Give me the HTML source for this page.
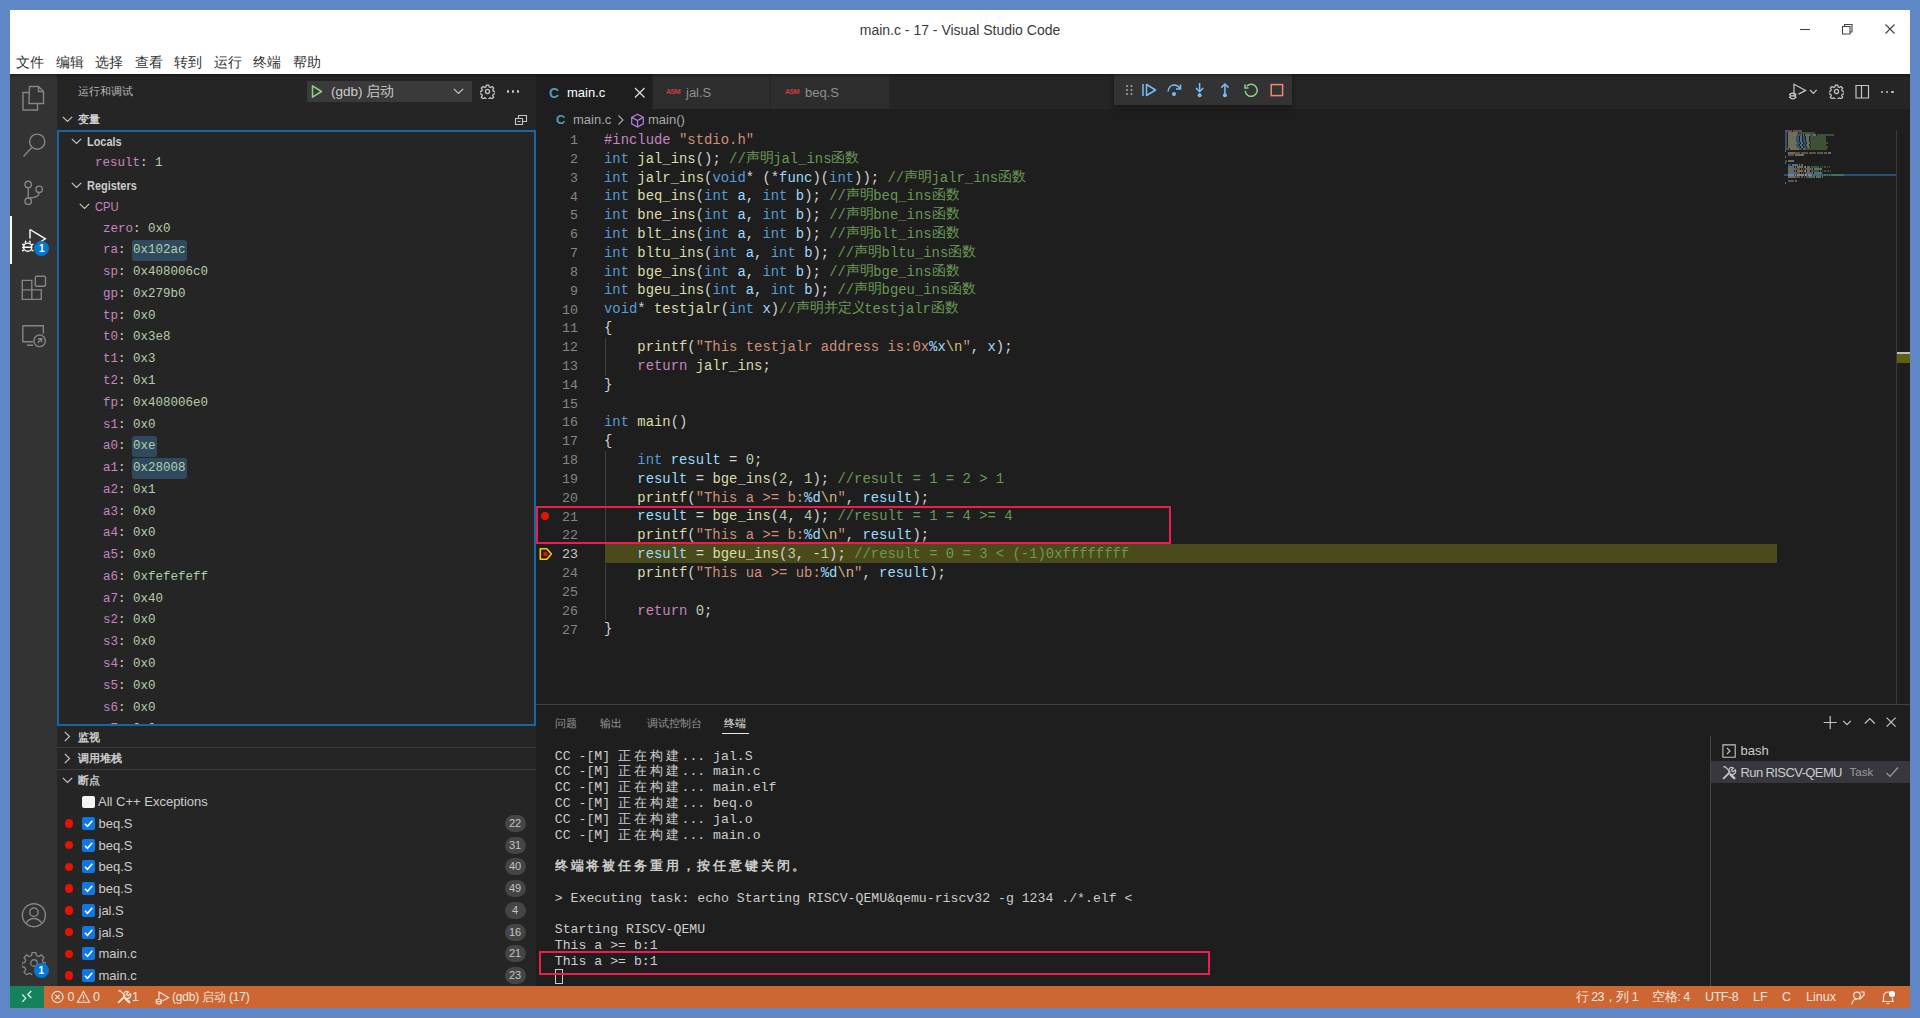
<!DOCTYPE html>
<html><head><meta charset="utf-8">
<style>
*{margin:0;padding:0;box-sizing:border-box}
html,body{width:1920px;height:1018px;overflow:hidden;background:#5f87c5;font-family:"Liberation Sans",sans-serif}
.a{position:absolute;white-space:pre}
.m{font-family:"Liberation Mono",monospace}
#win{position:absolute;left:10px;top:10px;width:1900px;height:998px;background:#fff;overflow:hidden}
#title{position:absolute;left:0;top:0;width:1900px;height:64px;background:#fff}
#act{position:absolute;left:0;top:64px;width:47px;height:912px;background:#333333}
#side{position:absolute;left:47px;top:64px;width:479px;height:912px;background:#252526}
#tabs{position:absolute;left:526px;top:64px;width:1374px;height:35px;background:#252526}
#editor{position:absolute;left:526px;top:99px;width:1374px;height:595px;background:#1e1e1e}
#panel{position:absolute;left:526px;top:694px;width:1374px;height:282px;background:#1e1e1e;overflow:hidden}
.term{font-size:13.2px;line-height:15.8px;color:#cccccc}
#edgrp{position:absolute;left:526px;top:64px;width:1374px;height:630px;overflow:hidden}
.cj{display:inline-block;overflow:hidden;vertical-align:top;white-space:nowrap}
.ln{text-align:right;font-size:13.3px;line-height:18.8px}
.code{font-size:13.9px;line-height:18.8px;color:#d4d4d4}
#status{position:absolute;left:0;top:976px;width:1900px;height:22px;background:#cc6633}
</style></head><body>
<div id="win">
 <div id="title">
  <div class="a" style="left:0;width:1900px;top:11px;text-align:center;font-size:14px;color:#3a3a3a;line-height:18px">main.c - 17 - Visual Studio Code</div>
  <svg class="a" style="left:1788px;top:11px" width="14" height="16"><path d="M2 8.5h10" stroke="#444" stroke-width="1.1"/></svg>
  <svg class="a" style="left:1831px;top:12px" width="14" height="14"><path d="M1.5 4.5h7.5v7.5h-7.5z M3.5 4.5v-2h7.5v7.5h-2" fill="none" stroke="#444" stroke-width="1.1"/></svg>
  <svg class="a" style="left:1873px;top:12px" width="14" height="14"><path d="M2.5 2.5l9 9M11.5 2.5l-9 9" stroke="#444" stroke-width="1.15"/></svg>
  <div class="a" style="left:6px;top:43px;font-size:14px;color:#333;line-height:18px">文件</div>
  <div class="a" style="left:45.5px;top:43px;font-size:14px;color:#333;line-height:18px">编辑</div>
  <div class="a" style="left:85px;top:43px;font-size:14px;color:#333;line-height:18px">选择</div>
  <div class="a" style="left:124.5px;top:43px;font-size:14px;color:#333;line-height:18px">查看</div>
  <div class="a" style="left:164px;top:43px;font-size:14px;color:#333;line-height:18px">转到</div>
  <div class="a" style="left:203.5px;top:43px;font-size:14px;color:#333;line-height:18px">运行</div>
  <div class="a" style="left:243px;top:43px;font-size:14px;color:#333;line-height:18px">终端</div>
  <div class="a" style="left:282.5px;top:43px;font-size:14px;color:#333;line-height:18px">帮助</div>
 </div>
 <div id="act">
  <svg class="a" style="left:0;top:0" width="47" height="912" fill="none" stroke="#858585" stroke-width="1.4">
   <!-- explorer -->
   <path d="M19.5 12.5h9l5 5v12h-14.5z M28.5 12.5v5h5"/>
   <path d="M19.5 18.5h-6.5v17.5h14.5v-6.5"/>
   <!-- search -->
   <circle cx="27.2" cy="67.7" r="7.6"/>
   <path d="M21.8 73.5l-8.3 9"/>
   <!-- scm -->
   <circle cx="18.2" cy="110.4" r="3.2"/>
   <circle cx="18.2" cy="127.2" r="3.2"/>
   <circle cx="29.2" cy="115.3" r="3.2"/>
   <path d="M18.2 113.6v10.4 M29.2 118.5c0 4-4 5.5-11 5.5"/>
   <!-- extensions -->
   <path d="M12.3 215.9h9.5v-9.5h-9.5z M12.3 215.9v9.5h9.5v-9.5 M21.8 215.9h9.5v9.5h-9.5z"/><rect x="25.3" y="202.2" width="10.2" height="10" rx="1.5"/>
   <!-- remote explorer -->
   <path d="M12.8 251.8h20.5v8 M12.8 251.8v16h10 M17 271.3h6"/>
   <circle cx="29.6" cy="266.8" r="5.8"/>
   <path d="M27.6 268.8l4-4 M28.1 264.8h3.5v3.5"/>
   <!-- accounts -->
   <circle cx="23.9" cy="841.2" r="11.5"/>
   <circle cx="23.9" cy="838.2" r="4.2"/>
   <path d="M16 849.5c2-3.5 5-5 7.9-5s5.9 1.5 7.9 5"/>
  </svg>
  <!-- debug active -->
  <div class="a" style="left:0;top:142px;width:2px;height:48px;background:#fff"></div>
  <svg class="a" style="left:0;top:140px" width="47" height="50" fill="none" stroke="#fff" stroke-width="1.4">
   <path d="M20 15.5v9 M20 15.5l15.4 9.3l-7 4.2"/>
   <circle cx="17.7" cy="33.2" r="4.1"/>
   <path d="M12 30.5h2 M12 33.5h1.8 M12 36.5h2 M21.5 30.5h2 M21.5 36.5h2 M15 28.8l1-2 M20.5 28.8l-1-2 M13.6 33.2h8.2"/>
  </svg>
  <div class="a" style="left:24.4px;top:166.6px;width:15px;height:15px;border-radius:50%;background:#0078d4;color:#fff;font-size:10px;font-weight:bold;text-align:center;line-height:15px">1</div>
  <!-- manage gear -->
  <svg class="a" style="left:11.5px;top:877px" width="24" height="24" viewBox="0 0 22 22" fill="none" stroke="#858585" stroke-width="1.2">
   <path d="M9.3 1.5h3.4l0.6 2.7 2 0.9 2.4-1.5 2.4 2.4-1.5 2.4 0.9 2 2.7 0.6v3.4l-2.7 0.6-0.9 2 1.5 2.4-2.4 2.4-2.4-1.5-2 0.9-0.6 2.7h-3.4l-0.6-2.7-2-0.9-2.4 1.5-2.4-2.4 1.5-2.4-0.9-2-2.7-0.6v-3.4l2.7-0.6 0.9-2-1.5-2.4 2.4-2.4 2.4 1.5 2-0.9z"/>
   <circle cx="11" cy="11" r="3"/>
  </svg>
  <div class="a" style="left:23.9px;top:888.5px;width:15px;height:15px;border-radius:50%;background:#0078d4;color:#fff;font-size:10px;font-weight:bold;text-align:center;line-height:15px">1</div>
 </div>
 <div id="side">
<div class="a" style="left:21.0px;top:10.0px;font-size:11px;line-height:14px;color:#bbbbbb;font-weight:normal;">运行和调试</div>
<div class="a" style="left:250.2px;top:7.400000000000006px;width:164.7px;height:20.9px;background:#3a3a3a"></div>
<svg class="a" style="left:253px;top:10px" width="14" height="15"><path d="M2.5 1.8v11.4l9-5.7z" fill="none" stroke="#89d185" stroke-width="1.5" stroke-linejoin="round"/></svg>
<div class="a" style="left:274.0px;top:8.5px;font-size:13.5px;line-height:18px;color:#cccccc;font-weight:normal;">(gdb) 启动</div>
<svg class="a" style="left:395.5px;top:14.0px" width="11" height="7"><path d="M0.8 0.8l4.7 4.7 4.7-4.7" fill="none" stroke="#c5c5c5" stroke-width="1.2"/></svg>
<svg class="a" style="left:422.5px;top:9.5px" width="15" height="15" viewBox="0 0 22 22" fill="none" stroke="#c5c5c5" stroke-width="1.9"><path d="M9.3 1.5h3.4l0.6 2.7 2 0.9 2.4-1.5 2.4 2.4-1.5 2.4 0.9 2 2.7 0.6v3.4l-2.7 0.6-0.9 2 1.5 2.4-2.4 2.4-2.4-1.5-2 0.9-0.6 2.7h-3.4l-0.6-2.7-2-0.9-2.4 1.5-2.4-2.4 1.5-2.4-0.9-2-2.7-0.6v-3.4l2.7-0.6 0.9-2-1.5-2.4 2.4-2.4 2.4 1.5 2-0.9z"/><circle cx="11" cy="11" r="3"/></svg>
<div class="a" style="left:449.9px;top:16.4px;width:2.6px;height:2.6px;border-radius:50%;background:#c5c5c5"></div>
<div class="a" style="left:454.9px;top:16.4px;width:2.6px;height:2.6px;border-radius:50%;background:#c5c5c5"></div>
<div class="a" style="left:459.9px;top:16.4px;width:2.6px;height:2.6px;border-radius:50%;background:#c5c5c5"></div>
<svg class="a" style="left:5.0px;top:41.5px" width="11" height="7"><path d="M0.8 0.8l4.7 4.7 4.7-4.7" fill="none" stroke="#c5c5c5" stroke-width="1.2"/></svg>
<div class="a" style="left:21.0px;top:38.0px;font-size:11px;line-height:14px;color:#cccccc;font-weight:bold;">变量</div>
<svg class="a" style="left:457px;top:38px" width="14" height="14" fill="none" stroke="#c5c5c5" stroke-width="1.1"><path d="M1.5 6.5h7v6h-7z M4.5 6.5v-3h8v6h-4 M3.5 9.5h3"/></svg>
<svg class="a" style="left:13.5px;top:64.0px" width="11" height="7"><path d="M0.8 0.8l4.7 4.7 4.7-4.7" fill="none" stroke="#c5c5c5" stroke-width="1.2"/></svg>
<div class="a" style="left:30.0px;top:59.0px;font-size:13px;line-height:17px;color:#cccccc;font-weight:bold;transform:scaleX(0.84);transform-origin:0 0">Locals</div>
<div class="a m" style="left:38.0px;top:81.3px;font-size:12.5px;line-height:16px;color:#cccccc;font-weight:normal;"><span style="color:#c586c0">result</span>: <span style="color:#b5cea8">1</span></div>
<svg class="a" style="left:13.5px;top:107.5px" width="11" height="7"><path d="M0.8 0.8l4.7 4.7 4.7-4.7" fill="none" stroke="#c5c5c5" stroke-width="1.2"/></svg>
<div class="a" style="left:30.0px;top:102.5px;font-size:13px;line-height:17px;color:#cccccc;font-weight:bold;transform:scaleX(0.84);transform-origin:0 0">Registers</div>
<svg class="a" style="left:21.5px;top:129.3px" width="11" height="7"><path d="M0.8 0.8l4.7 4.7 4.7-4.7" fill="none" stroke="#c5c5c5" stroke-width="1.2"/></svg>
<div class="a" style="left:38.0px;top:124.3px;font-size:13px;line-height:17px;color:#c586c0;font-weight:normal;transform:scaleX(0.86);transform-origin:0 0">CPU</div>
<div class="a m" style="left:46.0px;top:146.6px;font-size:12.5px;line-height:16px;color:#cccccc;font-weight:normal;"><span style="color:#c586c0">zero</span>: <span style="color:#b5cea8">0x0</span></div>
<div class="a" style="left:74.5px;top:165.8px;width:55.5px;height:21px;border-radius:3px;background:#2f4a5f"></div>
<div class="a m" style="left:46.0px;top:168.3px;font-size:12.5px;line-height:16px;color:#cccccc;font-weight:normal;"><span style="color:#c586c0">ra</span>: <span style="color:#b5cea8">0x102ac</span></div>
<div class="a m" style="left:46.0px;top:190.1px;font-size:12.5px;line-height:16px;color:#cccccc;font-weight:normal;"><span style="color:#c586c0">sp</span>: <span style="color:#b5cea8">0x408006c0</span></div>
<div class="a m" style="left:46.0px;top:211.9px;font-size:12.5px;line-height:16px;color:#cccccc;font-weight:normal;"><span style="color:#c586c0">gp</span>: <span style="color:#b5cea8">0x279b0</span></div>
<div class="a m" style="left:46.0px;top:233.7px;font-size:12.5px;line-height:16px;color:#cccccc;font-weight:normal;"><span style="color:#c586c0">tp</span>: <span style="color:#b5cea8">0x0</span></div>
<div class="a m" style="left:46.0px;top:255.4px;font-size:12.5px;line-height:16px;color:#cccccc;font-weight:normal;"><span style="color:#c586c0">t0</span>: <span style="color:#b5cea8">0x3e8</span></div>
<div class="a m" style="left:46.0px;top:277.2px;font-size:12.5px;line-height:16px;color:#cccccc;font-weight:normal;"><span style="color:#c586c0">t1</span>: <span style="color:#b5cea8">0x3</span></div>
<div class="a m" style="left:46.0px;top:299.0px;font-size:12.5px;line-height:16px;color:#cccccc;font-weight:normal;"><span style="color:#c586c0">t2</span>: <span style="color:#b5cea8">0x1</span></div>
<div class="a m" style="left:46.0px;top:320.7px;font-size:12.5px;line-height:16px;color:#cccccc;font-weight:normal;"><span style="color:#c586c0">fp</span>: <span style="color:#b5cea8">0x408006e0</span></div>
<div class="a m" style="left:46.0px;top:342.5px;font-size:12.5px;line-height:16px;color:#cccccc;font-weight:normal;"><span style="color:#c586c0">s1</span>: <span style="color:#b5cea8">0x0</span></div>
<div class="a" style="left:74.5px;top:361.8px;width:25.5px;height:21px;border-radius:3px;background:#2f4a5f"></div>
<div class="a m" style="left:46.0px;top:364.3px;font-size:12.5px;line-height:16px;color:#cccccc;font-weight:normal;"><span style="color:#c586c0">a0</span>: <span style="color:#b5cea8">0xe</span></div>
<div class="a" style="left:74.5px;top:383.6px;width:55.5px;height:21px;border-radius:3px;background:#2f4a5f"></div>
<div class="a m" style="left:46.0px;top:386.1px;font-size:12.5px;line-height:16px;color:#cccccc;font-weight:normal;"><span style="color:#c586c0">a1</span>: <span style="color:#b5cea8">0x28008</span></div>
<div class="a m" style="left:46.0px;top:407.8px;font-size:12.5px;line-height:16px;color:#cccccc;font-weight:normal;"><span style="color:#c586c0">a2</span>: <span style="color:#b5cea8">0x1</span></div>
<div class="a m" style="left:46.0px;top:429.6px;font-size:12.5px;line-height:16px;color:#cccccc;font-weight:normal;"><span style="color:#c586c0">a3</span>: <span style="color:#b5cea8">0x0</span></div>
<div class="a m" style="left:46.0px;top:451.4px;font-size:12.5px;line-height:16px;color:#cccccc;font-weight:normal;"><span style="color:#c586c0">a4</span>: <span style="color:#b5cea8">0x0</span></div>
<div class="a m" style="left:46.0px;top:473.1px;font-size:12.5px;line-height:16px;color:#cccccc;font-weight:normal;"><span style="color:#c586c0">a5</span>: <span style="color:#b5cea8">0x0</span></div>
<div class="a m" style="left:46.0px;top:494.9px;font-size:12.5px;line-height:16px;color:#cccccc;font-weight:normal;"><span style="color:#c586c0">a6</span>: <span style="color:#b5cea8">0xfefefeff</span></div>
<div class="a m" style="left:46.0px;top:516.7px;font-size:12.5px;line-height:16px;color:#cccccc;font-weight:normal;"><span style="color:#c586c0">a7</span>: <span style="color:#b5cea8">0x40</span></div>
<div class="a m" style="left:46.0px;top:538.4px;font-size:12.5px;line-height:16px;color:#cccccc;font-weight:normal;"><span style="color:#c586c0">s2</span>: <span style="color:#b5cea8">0x0</span></div>
<div class="a m" style="left:46.0px;top:560.2px;font-size:12.5px;line-height:16px;color:#cccccc;font-weight:normal;"><span style="color:#c586c0">s3</span>: <span style="color:#b5cea8">0x0</span></div>
<div class="a m" style="left:46.0px;top:582.0px;font-size:12.5px;line-height:16px;color:#cccccc;font-weight:normal;"><span style="color:#c586c0">s4</span>: <span style="color:#b5cea8">0x0</span></div>
<div class="a m" style="left:46.0px;top:603.8px;font-size:12.5px;line-height:16px;color:#cccccc;font-weight:normal;"><span style="color:#c586c0">s5</span>: <span style="color:#b5cea8">0x0</span></div>
<div class="a m" style="left:46.0px;top:625.5px;font-size:12.5px;line-height:16px;color:#cccccc;font-weight:normal;"><span style="color:#c586c0">s6</span>: <span style="color:#b5cea8">0x0</span></div>
<div class="a m" style="left:46.0px;top:647.3px;font-size:12.5px;line-height:16px;color:#cccccc;font-weight:normal;"><span style="color:#c586c0">s7</span>: <span style="color:#b5cea8">0x0</span></div>
<div class="a" style="left:0;top:651px;width:479px;height:261px;background:#252526"></div>
<div class="a" style="left:0;top:56px;width:479px;height:595.5px;border:2px solid #1566a3"></div>
<svg class="a" style="left:6.5px;top:657.2px" width="7" height="11"><path d="M0.8 0.8l4.7 4.7-4.7 4.7" fill="none" stroke="#c5c5c5" stroke-width="1.2"/></svg>
<div class="a" style="left:21.0px;top:655.7px;font-size:11px;line-height:14px;color:#cccccc;font-weight:bold;">监视</div>
<div class="a" style="left:0;top:673px;width:479px;height:1px;background:#3c3c3c"></div>
<svg class="a" style="left:6.5px;top:678.8px" width="7" height="11"><path d="M0.8 0.8l4.7 4.7-4.7 4.7" fill="none" stroke="#c5c5c5" stroke-width="1.2"/></svg>
<div class="a" style="left:21.0px;top:677.3px;font-size:11px;line-height:14px;color:#cccccc;font-weight:bold;">调用堆栈</div>
<div class="a" style="left:0;top:695px;width:479px;height:1px;background:#3c3c3c"></div>
<svg class="a" style="left:5.0px;top:702.5px" width="11" height="7"><path d="M0.8 0.8l4.7 4.7 4.7-4.7" fill="none" stroke="#c5c5c5" stroke-width="1.2"/></svg>
<div class="a" style="left:21.0px;top:699.0px;font-size:11px;line-height:14px;color:#cccccc;font-weight:bold;">断点</div>
<div class="a" style="left:25px;top:721.5px;width:13px;height:12.5px;border-radius:2px;background:#f4f4f4"></div>
<div class="a" style="left:41.0px;top:719.0px;font-size:13px;line-height:17px;color:#cccccc;font-weight:normal;">All C++ Exceptions</div>
<div class="a" style="left:7.7px;top:745.0px;width:8.6px;height:8.6px;border-radius:50%;background:#e51400"></div>
<div class="a" style="left:25px;top:742.8px;width:13px;height:13px;border-radius:2px;background:#0f77e4"></div>
<svg class="a" style="left:25px;top:742.8px" width="13" height="13"><path d="M3 6.8l2.5 2.5 4.8-5.6" fill="none" stroke="#fff" stroke-width="1.6"/></svg>
<div class="a" style="left:41.5px;top:740.8px;font-size:13px;line-height:17px;color:#cccccc;font-weight:normal;">beq.S</div>
<div class="a" style="left:447.5px;top:740.8px;width:21px;height:17px;border-radius:9px;background:#454545;color:#c4c4c4;font-size:11px;line-height:17px;text-align:center">22</div>
<div class="a" style="left:7.7px;top:766.8px;width:8.6px;height:8.6px;border-radius:50%;background:#e51400"></div>
<div class="a" style="left:25px;top:764.6px;width:13px;height:13px;border-radius:2px;background:#0f77e4"></div>
<svg class="a" style="left:25px;top:764.6px" width="13" height="13"><path d="M3 6.8l2.5 2.5 4.8-5.6" fill="none" stroke="#fff" stroke-width="1.6"/></svg>
<div class="a" style="left:41.5px;top:762.6px;font-size:13px;line-height:17px;color:#cccccc;font-weight:normal;">beq.S</div>
<div class="a" style="left:447.5px;top:762.6px;width:21px;height:17px;border-radius:9px;background:#454545;color:#c4c4c4;font-size:11px;line-height:17px;text-align:center">31</div>
<div class="a" style="left:7.7px;top:788.5px;width:8.6px;height:8.6px;border-radius:50%;background:#e51400"></div>
<div class="a" style="left:25px;top:786.3px;width:13px;height:13px;border-radius:2px;background:#0f77e4"></div>
<svg class="a" style="left:25px;top:786.3px" width="13" height="13"><path d="M3 6.8l2.5 2.5 4.8-5.6" fill="none" stroke="#fff" stroke-width="1.6"/></svg>
<div class="a" style="left:41.5px;top:784.3px;font-size:13px;line-height:17px;color:#cccccc;font-weight:normal;">beq.S</div>
<div class="a" style="left:447.5px;top:784.3px;width:21px;height:17px;border-radius:9px;background:#454545;color:#c4c4c4;font-size:11px;line-height:17px;text-align:center">40</div>
<div class="a" style="left:7.7px;top:810.3px;width:8.6px;height:8.6px;border-radius:50%;background:#e51400"></div>
<div class="a" style="left:25px;top:808.1px;width:13px;height:13px;border-radius:2px;background:#0f77e4"></div>
<svg class="a" style="left:25px;top:808.1px" width="13" height="13"><path d="M3 6.8l2.5 2.5 4.8-5.6" fill="none" stroke="#fff" stroke-width="1.6"/></svg>
<div class="a" style="left:41.5px;top:806.1px;font-size:13px;line-height:17px;color:#cccccc;font-weight:normal;">beq.S</div>
<div class="a" style="left:447.5px;top:806.1px;width:21px;height:17px;border-radius:9px;background:#454545;color:#c4c4c4;font-size:11px;line-height:17px;text-align:center">49</div>
<div class="a" style="left:7.7px;top:832.1px;width:8.6px;height:8.6px;border-radius:50%;background:#e51400"></div>
<div class="a" style="left:25px;top:829.9px;width:13px;height:13px;border-radius:2px;background:#0f77e4"></div>
<svg class="a" style="left:25px;top:829.9px" width="13" height="13"><path d="M3 6.8l2.5 2.5 4.8-5.6" fill="none" stroke="#fff" stroke-width="1.6"/></svg>
<div class="a" style="left:41.5px;top:827.9px;font-size:13px;line-height:17px;color:#cccccc;font-weight:normal;">jal.S</div>
<div class="a" style="left:447.5px;top:827.9px;width:21px;height:17px;border-radius:9px;background:#454545;color:#c4c4c4;font-size:11px;line-height:17px;text-align:center">4</div>
<div class="a" style="left:7.7px;top:853.9px;width:8.6px;height:8.6px;border-radius:50%;background:#e51400"></div>
<div class="a" style="left:25px;top:851.6px;width:13px;height:13px;border-radius:2px;background:#0f77e4"></div>
<svg class="a" style="left:25px;top:851.6px" width="13" height="13"><path d="M3 6.8l2.5 2.5 4.8-5.6" fill="none" stroke="#fff" stroke-width="1.6"/></svg>
<div class="a" style="left:41.5px;top:849.6px;font-size:13px;line-height:17px;color:#cccccc;font-weight:normal;">jal.S</div>
<div class="a" style="left:447.5px;top:849.6px;width:21px;height:17px;border-radius:9px;background:#454545;color:#c4c4c4;font-size:11px;line-height:17px;text-align:center">16</div>
<div class="a" style="left:7.7px;top:875.6px;width:8.6px;height:8.6px;border-radius:50%;background:#e51400"></div>
<div class="a" style="left:25px;top:873.4px;width:13px;height:13px;border-radius:2px;background:#0f77e4"></div>
<svg class="a" style="left:25px;top:873.4px" width="13" height="13"><path d="M3 6.8l2.5 2.5 4.8-5.6" fill="none" stroke="#fff" stroke-width="1.6"/></svg>
<div class="a" style="left:41.5px;top:871.4px;font-size:13px;line-height:17px;color:#cccccc;font-weight:normal;">main.c</div>
<div class="a" style="left:447.5px;top:871.4px;width:21px;height:17px;border-radius:9px;background:#454545;color:#c4c4c4;font-size:11px;line-height:17px;text-align:center">21</div>
<div class="a" style="left:7.7px;top:897.4px;width:8.6px;height:8.6px;border-radius:50%;background:#e51400"></div>
<div class="a" style="left:25px;top:895.2px;width:13px;height:13px;border-radius:2px;background:#0f77e4"></div>
<svg class="a" style="left:25px;top:895.2px" width="13" height="13"><path d="M3 6.8l2.5 2.5 4.8-5.6" fill="none" stroke="#fff" stroke-width="1.6"/></svg>
<div class="a" style="left:41.5px;top:893.2px;font-size:13px;line-height:17px;color:#cccccc;font-weight:normal;">main.c</div>
<div class="a" style="left:447.5px;top:893.2px;width:21px;height:17px;border-radius:9px;background:#454545;color:#c4c4c4;font-size:11px;line-height:17px;text-align:center">23</div>
</div><!--SIDE_END-->
 <div id="tabs"></div>
 <div id="editor"></div>
<div id="edgrp">
<div class="a" style="left:0;top:0;width:117px;height:35px;background:#1e1e1e;border-right:1px solid #252526"></div>
<div class="a" style="left:117px;top:0;width:118px;height:35px;background:#2d2d2d;border-right:1px solid #252526"></div>
<div class="a" style="left:235px;top:0;width:119px;height:35px;background:#2d2d2d;border-right:1px solid #252526"></div>
<div class="a" style="left:13px;top:9.5px;font-size:14px;font-weight:bold;color:#519aba;line-height:18px">C</div>
<div class="a" style="left:31px;top:10px;font-size:13px;color:#ffffff;line-height:18px">main.c</div>
<svg class="a" style="left:97.5px;top:13px" width="12" height="12"><path d="M1 1l9.5 9.5M10.5 1l-9.5 9.5" stroke="#e0e0e0" stroke-width="1.2"/></svg>
<div class="a" style="left:130px;top:13.5px;font-size:7px;font-weight:bold;color:#cc3e44;line-height:8px;letter-spacing:-0.5px">ASM</div>
<div class="a" style="left:150px;top:10px;font-size:13px;color:#8f8f8f;line-height:18px">jal.S</div>
<div class="a" style="left:249px;top:13.5px;font-size:7px;font-weight:bold;color:#cc3e44;line-height:8px;letter-spacing:-0.5px">ASM</div>
<div class="a" style="left:269px;top:10px;font-size:13px;color:#8f8f8f;line-height:18px">beq.S</div>
<div class="a" style="left:20px;top:38px;font-size:13px;font-weight:bold;color:#519aba;line-height:16px">C</div>
<div class="a" style="left:37px;top:38px;font-size:13px;color:#a9a9a9;line-height:16px">main.c</div>
<svg class="a" style="left:81px;top:40px" width="8" height="12"><path d="M1.5 1.5l4.5 4.5-4.5 4.5" fill="none" stroke="#a9a9a9" stroke-width="1.1"/></svg>
<svg class="a" style="left:94px;top:39px" width="15" height="15" fill="none" stroke="#b180d7" stroke-width="1.2"><path d="M7.5 1.2l5.8 3.2v6.4l-5.8 3.2-5.8-3.2v-6.4z M1.7 4.4l5.8 3.2 5.8-3.2 M7.5 7.6v6.4"/></svg>
<div class="a" style="left:112px;top:38px;font-size:13px;color:#a9a9a9;line-height:16px">main()</div>
<div class="a" style="left:69px;top:469.8px;width:1172.4px;height:18.8px;background:#4b4a1a"></div>
<div class="a" style="left:68.5px;top:263.9px;width:1px;height:37.7px;background:#404040"></div>
<div class="a" style="left:68.5px;top:376.9px;width:1px;height:94.1px;background:#404040"></div>
<div class="a" style="left:68.5px;top:489.9px;width:1px;height:56.5px;background:#404040"></div>
<div class="a m ln" style="left:2px;top:58.0px;width:40px;color:#858585">1</div>
<div class="a m code" style="left:68px;top:56.8px"><span style="color:#c586c0">#include</span> <span style="color:#ce9178">"stdio.h"</span></div>
<div class="a m ln" style="left:2px;top:76.8px;width:40px;color:#858585">2</div>
<div class="a m code" style="left:68px;top:75.6px"><span style="color:#569cd6">int</span> <span style="color:#dcdcaa">jal_ins</span>(); <span style="color:#6a9955">//<span class="cj" style="width:27.40px;font-size:13.5px">声明</span>jal_ins<span class="cj" style="width:27.40px;font-size:13.5px">函数</span></span></div>
<div class="a m ln" style="left:2px;top:95.7px;width:40px;color:#858585">3</div>
<div class="a m code" style="left:68px;top:94.5px"><span style="color:#569cd6">int</span> <span style="color:#dcdcaa">jalr_ins</span>(<span style="color:#569cd6">void</span>* (*<span style="color:#9cdcfe">func</span>)(<span style="color:#569cd6">int</span>)); <span style="color:#6a9955">//<span class="cj" style="width:27.40px;font-size:13.5px">声明</span>jalr_ins<span class="cj" style="width:27.40px;font-size:13.5px">函数</span></span></div>
<div class="a m ln" style="left:2px;top:114.5px;width:40px;color:#858585">4</div>
<div class="a m code" style="left:68px;top:113.3px"><span style="color:#569cd6">int</span> <span style="color:#dcdcaa">beq_ins</span>(<span style="color:#569cd6">int</span> <span style="color:#9cdcfe">a</span>, <span style="color:#569cd6">int</span> <span style="color:#9cdcfe">b</span>); <span style="color:#6a9955">//<span class="cj" style="width:27.40px;font-size:13.5px">声明</span>beq_ins<span class="cj" style="width:27.40px;font-size:13.5px">函数</span></span></div>
<div class="a m ln" style="left:2px;top:133.3px;width:40px;color:#858585">5</div>
<div class="a m code" style="left:68px;top:132.1px"><span style="color:#569cd6">int</span> <span style="color:#dcdcaa">bne_ins</span>(<span style="color:#569cd6">int</span> <span style="color:#9cdcfe">a</span>, <span style="color:#569cd6">int</span> <span style="color:#9cdcfe">b</span>); <span style="color:#6a9955">//<span class="cj" style="width:27.40px;font-size:13.5px">声明</span>bne_ins<span class="cj" style="width:27.40px;font-size:13.5px">函数</span></span></div>
<div class="a m ln" style="left:2px;top:152.1px;width:40px;color:#858585">6</div>
<div class="a m code" style="left:68px;top:150.9px"><span style="color:#569cd6">int</span> <span style="color:#dcdcaa">blt_ins</span>(<span style="color:#569cd6">int</span> <span style="color:#9cdcfe">a</span>, <span style="color:#569cd6">int</span> <span style="color:#9cdcfe">b</span>); <span style="color:#6a9955">//<span class="cj" style="width:27.40px;font-size:13.5px">声明</span>blt_ins<span class="cj" style="width:27.40px;font-size:13.5px">函数</span></span></div>
<div class="a m ln" style="left:2px;top:171.0px;width:40px;color:#858585">7</div>
<div class="a m code" style="left:68px;top:169.8px"><span style="color:#569cd6">int</span> <span style="color:#dcdcaa">bltu_ins</span>(<span style="color:#569cd6">int</span> <span style="color:#9cdcfe">a</span>, <span style="color:#569cd6">int</span> <span style="color:#9cdcfe">b</span>); <span style="color:#6a9955">//<span class="cj" style="width:27.40px;font-size:13.5px">声明</span>bltu_ins<span class="cj" style="width:27.40px;font-size:13.5px">函数</span></span></div>
<div class="a m ln" style="left:2px;top:189.8px;width:40px;color:#858585">8</div>
<div class="a m code" style="left:68px;top:188.6px"><span style="color:#569cd6">int</span> <span style="color:#dcdcaa">bge_ins</span>(<span style="color:#569cd6">int</span> <span style="color:#9cdcfe">a</span>, <span style="color:#569cd6">int</span> <span style="color:#9cdcfe">b</span>); <span style="color:#6a9955">//<span class="cj" style="width:27.40px;font-size:13.5px">声明</span>bge_ins<span class="cj" style="width:27.40px;font-size:13.5px">函数</span></span></div>
<div class="a m ln" style="left:2px;top:208.6px;width:40px;color:#858585">9</div>
<div class="a m code" style="left:68px;top:207.4px"><span style="color:#569cd6">int</span> <span style="color:#dcdcaa">bgeu_ins</span>(<span style="color:#569cd6">int</span> <span style="color:#9cdcfe">a</span>, <span style="color:#569cd6">int</span> <span style="color:#9cdcfe">b</span>); <span style="color:#6a9955">//<span class="cj" style="width:27.40px;font-size:13.5px">声明</span>bgeu_ins<span class="cj" style="width:27.40px;font-size:13.5px">函数</span></span></div>
<div class="a m ln" style="left:2px;top:227.5px;width:40px;color:#858585">10</div>
<div class="a m code" style="left:68px;top:226.3px"><span style="color:#569cd6">void</span>* <span style="color:#dcdcaa">testjalr</span>(<span style="color:#569cd6">int</span> <span style="color:#9cdcfe">x</span>)<span style="color:#6a9955">//<span class="cj" style="width:68.50px;font-size:13.5px">声明并定义</span>testjalr<span class="cj" style="width:27.40px;font-size:13.5px">函数</span></span></div>
<div class="a m ln" style="left:2px;top:246.3px;width:40px;color:#858585">11</div>
<div class="a m code" style="left:68px;top:245.1px">{</div>
<div class="a m ln" style="left:2px;top:265.1px;width:40px;color:#858585">12</div>
<div class="a m code" style="left:68px;top:263.9px">    <span style="color:#dcdcaa">printf</span>(<span style="color:#ce9178">"This testjalr address is:0x</span><span style="color:#9cdcfe">%x</span><span style="color:#d7ba7d">\n</span><span style="color:#ce9178">"</span>, <span style="color:#9cdcfe">x</span>);</div>
<div class="a m ln" style="left:2px;top:284.0px;width:40px;color:#858585">13</div>
<div class="a m code" style="left:68px;top:282.8px">    <span style="color:#c586c0">return</span> <span style="color:#dcdcaa">jalr_ins</span>;</div>
<div class="a m ln" style="left:2px;top:302.8px;width:40px;color:#858585">14</div>
<div class="a m code" style="left:68px;top:301.6px">}</div>
<div class="a m ln" style="left:2px;top:321.6px;width:40px;color:#858585">15</div>
<div class="a m ln" style="left:2px;top:340.4px;width:40px;color:#858585">16</div>
<div class="a m code" style="left:68px;top:339.2px"><span style="color:#569cd6">int</span> <span style="color:#dcdcaa">main</span>()</div>
<div class="a m ln" style="left:2px;top:359.3px;width:40px;color:#858585">17</div>
<div class="a m code" style="left:68px;top:358.1px">{</div>
<div class="a m ln" style="left:2px;top:378.1px;width:40px;color:#858585">18</div>
<div class="a m code" style="left:68px;top:376.9px">    <span style="color:#569cd6">int</span> <span style="color:#9cdcfe">result</span> = <span style="color:#b5cea8">0</span>;</div>
<div class="a m ln" style="left:2px;top:396.9px;width:40px;color:#858585">19</div>
<div class="a m code" style="left:68px;top:395.7px">    <span style="color:#9cdcfe">result</span> = <span style="color:#dcdcaa">bge_ins</span>(<span style="color:#b5cea8">2</span>, <span style="color:#b5cea8">1</span>); <span style="color:#6a9955">//result = 1 = 2 &gt; 1</span></div>
<div class="a m ln" style="left:2px;top:415.8px;width:40px;color:#858585">20</div>
<div class="a m code" style="left:68px;top:414.6px">    <span style="color:#dcdcaa">printf</span>(<span style="color:#ce9178">"This a &gt;= b:</span><span style="color:#9cdcfe">%d</span><span style="color:#d7ba7d">\n</span><span style="color:#ce9178">"</span>, <span style="color:#9cdcfe">result</span>);</div>
<div class="a m ln" style="left:2px;top:434.6px;width:40px;color:#858585">21</div>
<div class="a m code" style="left:68px;top:433.4px">    <span style="color:#9cdcfe">result</span> = <span style="color:#dcdcaa">bge_ins</span>(<span style="color:#b5cea8">4</span>, <span style="color:#b5cea8">4</span>); <span style="color:#6a9955">//result = 1 = 4 &gt;= 4</span></div>
<div class="a m ln" style="left:2px;top:453.4px;width:40px;color:#858585">22</div>
<div class="a m code" style="left:68px;top:452.2px">    <span style="color:#dcdcaa">printf</span>(<span style="color:#ce9178">"This a &gt;= b:</span><span style="color:#9cdcfe">%d</span><span style="color:#d7ba7d">\n</span><span style="color:#ce9178">"</span>, <span style="color:#9cdcfe">result</span>);</div>
<div class="a m ln" style="left:2px;top:472.3px;width:40px;color:#c6c6c6">23</div>
<div class="a m code" style="left:68px;top:471.1px">    <span style="color:#9cdcfe">result</span> = <span style="color:#dcdcaa">bgeu_ins</span>(<span style="color:#b5cea8">3</span>, -<span style="color:#b5cea8">1</span>); <span style="color:#6a9955">//result = 0 = 3 &lt; (-1)0xffffffff</span></div>
<div class="a m ln" style="left:2px;top:491.1px;width:40px;color:#858585">24</div>
<div class="a m code" style="left:68px;top:489.9px">    <span style="color:#dcdcaa">printf</span>(<span style="color:#ce9178">"This ua &gt;= ub:</span><span style="color:#9cdcfe">%d</span><span style="color:#d7ba7d">\n</span><span style="color:#ce9178">"</span>, <span style="color:#9cdcfe">result</span>);</div>
<div class="a m ln" style="left:2px;top:509.9px;width:40px;color:#858585">25</div>
<div class="a m ln" style="left:2px;top:528.8px;width:40px;color:#858585">26</div>
<div class="a m code" style="left:68px;top:527.5px">    <span style="color:#c586c0">return</span> <span style="color:#b5cea8">0</span>;</div>
<div class="a m ln" style="left:2px;top:547.6px;width:40px;color:#858585">27</div>
<div class="a m code" style="left:68px;top:546.4px">}</div>
<div class="a" style="left:4.7px;top:437.9px;width:8.6px;height:8.6px;border-radius:50%;background:#e51400"></div>
<svg class="a" style="left:2px;top:472px" width="16" height="16"><path d="M2.3 2.8h6.5l4.6 5.2-4.6 5.2h-6.5z" fill="none" stroke="#ffcc00" stroke-width="1.6" stroke-linejoin="round"/><circle cx="7.4" cy="8" r="2.2" fill="#e51400"/></svg>
<div class="a" style="left:0.2999999999999545px;top:431.6px;width:634.9px;height:38.3px;border:2.7px solid #f01b4e"></div>
<div class="a" style="left:578px;top:0;width:178px;height:31px;background:#333333;box-shadow:0 2px 5px rgba(0,0,0,0.45)"></div>
<svg class="a" style="left:574px;top:0px" width="190" height="32" viewBox="1110 74 190 32">
<circle cx="1127" cy="86" r="1.1" fill="#a0a0a0"/><circle cx="1127" cy="90" r="1.1" fill="#a0a0a0"/><circle cx="1127" cy="94" r="1.1" fill="#a0a0a0"/><circle cx="1131.5" cy="86" r="1.1" fill="#a0a0a0"/><circle cx="1131.5" cy="90" r="1.1" fill="#a0a0a0"/><circle cx="1131.5" cy="94" r="1.1" fill="#a0a0a0"/>
<g fill="none" stroke="#75beff" stroke-width="1.5">
<path d="M1143 84v12"/><path d="M1146.5 84.5v11l9-5.5z" stroke-linejoin="round"/>
<path d="M1168 91.5c0.5-4.5 3.5-6.5 6-6.5s4.5 1.2 5.8 3.2"/><path d="M1180.5 84.5v4.5h-4.5"/>
<path d="M1199.6 83v8.5"/><path d="M1196 88l3.6 3.6 3.6-3.6"/>
<path d="M1224.9 96v-12"/><path d="M1221.3 87.6l3.6-3.6 3.6 3.6"/>
</g>
<g fill="#75beff"><circle cx="1174" cy="94" r="2"/><circle cx="1199.6" cy="95.3" r="2"/><circle cx="1224.9" cy="95.3" r="2"/></g>
<g fill="none" stroke="#89d185" stroke-width="1.5"><path d="M1246.8 86.2a6 6 0 1 1 -1.6 4.5"/><path d="M1245 84.5v3.5h3.5"/></g>
<rect x="1271.2" y="84.6" width="11.4" height="11" fill="none" stroke="#f48771" stroke-width="1.5"/>
</svg>
<svg class="a" style="left:1249px;top:6px" width="115" height="24" viewBox="1785 80 115 24" fill="none" stroke="#c5c5c5" stroke-width="1.2">
<path d="M1794 96.5v-12.3l11.6 6.2-7 3.7"/>
<circle cx="1792.8" cy="96" r="2.8"/><path d="M1789 94h1 M1789 97.5h1 M1795.6 94h1 M1795.6 97.5h1 M1790.5 95.8h4.6"/>
<path d="M1810 90l3.3 3.3 3.3-3.3"/>
<path d="M1861.5 85.5v13 M1856 85.5h12.5v12.5h-12.5z"/>
</svg>
<svg class="a" style="left:1292.5px;top:10.200000000000003px" width="15" height="15" viewBox="0 0 22 22" fill="none" stroke="#c5c5c5" stroke-width="1.8"><path d="M9.3 1.5h3.4l0.6 2.7 2 0.9 2.4-1.5 2.4 2.4-1.5 2.4 0.9 2 2.7 0.6v3.4l-2.7 0.6-0.9 2 1.5 2.4-2.4 2.4-2.4-1.5-2 0.9-0.6 2.7h-3.4l-0.6-2.7-2-0.9-2.4 1.5-2.4-2.4 1.5-2.4-0.9-2-2.7-0.6v-3.4l2.7-0.6 0.9-2-1.5-2.4 2.4-2.4 2.4 1.5 2-0.9z"/><circle cx="11" cy="11" r="3"/></svg>
<div class="a" style="left:1345.1px;top:16.8px;width:2.2px;height:2.2px;border-radius:50%;background:#c5c5c5"></div>
<div class="a" style="left:1350.3px;top:16.8px;width:2.2px;height:2.2px;border-radius:50%;background:#c5c5c5"></div>
<div class="a" style="left:1355.4px;top:16.8px;width:2.2px;height:2.2px;border-radius:50%;background:#c5c5c5"></div>
<div class="a" style="left:1248px;top:99.80000000000001px;width:112px;height:2px;background:#264f78"></div>
<div class="a" style="left:1248.5px;top:55.8px;width:7.6px;height:1.8px;background:#c586c0;opacity:0.42"></div>
<div class="a" style="left:1257.0px;top:55.8px;width:8.5px;height:1.8px;background:#ce9178;opacity:0.42"></div>
<div class="a" style="left:1248.5px;top:57.8px;width:2.8px;height:1.8px;background:#569cd6;opacity:0.42"></div>
<div class="a" style="left:1252.3px;top:57.8px;width:6.6px;height:1.8px;background:#dcdcaa;opacity:0.42"></div>
<div class="a" style="left:1259.0px;top:57.8px;width:2.8px;height:1.8px;background:#d4d4d4;opacity:0.42"></div>
<div class="a" style="left:1262.8px;top:57.8px;width:16.1px;height:1.8px;background:#6a9955;opacity:0.42"></div>
<div class="a" style="left:1248.5px;top:59.8px;width:2.8px;height:1.8px;background:#569cd6;opacity:0.42"></div>
<div class="a" style="left:1252.3px;top:59.8px;width:7.6px;height:1.8px;background:#dcdcaa;opacity:0.42"></div>
<div class="a" style="left:1259.9px;top:59.8px;width:0.9px;height:1.8px;background:#d4d4d4;opacity:0.42"></div>
<div class="a" style="left:1260.8px;top:59.8px;width:3.8px;height:1.8px;background:#569cd6;opacity:0.42"></div>
<div class="a" style="left:1264.7px;top:59.8px;width:0.9px;height:1.8px;background:#d4d4d4;opacity:0.42"></div>
<div class="a" style="left:1266.5px;top:59.8px;width:1.9px;height:1.8px;background:#d4d4d4;opacity:0.42"></div>
<div class="a" style="left:1268.5px;top:59.8px;width:3.8px;height:1.8px;background:#9cdcfe;opacity:0.42"></div>
<div class="a" style="left:1272.2px;top:59.8px;width:1.9px;height:1.8px;background:#d4d4d4;opacity:0.42"></div>
<div class="a" style="left:1274.2px;top:59.8px;width:2.8px;height:1.8px;background:#569cd6;opacity:0.42"></div>
<div class="a" style="left:1277.0px;top:59.8px;width:2.8px;height:1.8px;background:#d4d4d4;opacity:0.42"></div>
<div class="a" style="left:1280.8px;top:59.8px;width:17.1px;height:1.8px;background:#6a9955;opacity:0.42"></div>
<div class="a" style="left:1248.5px;top:61.8px;width:2.8px;height:1.8px;background:#569cd6;opacity:0.42"></div>
<div class="a" style="left:1252.3px;top:61.8px;width:6.6px;height:1.8px;background:#dcdcaa;opacity:0.42"></div>
<div class="a" style="left:1259.0px;top:61.8px;width:0.9px;height:1.8px;background:#d4d4d4;opacity:0.42"></div>
<div class="a" style="left:1259.9px;top:61.8px;width:2.8px;height:1.8px;background:#569cd6;opacity:0.42"></div>
<div class="a" style="left:1263.7px;top:61.8px;width:0.9px;height:1.8px;background:#9cdcfe;opacity:0.42"></div>
<div class="a" style="left:1264.7px;top:61.8px;width:0.9px;height:1.8px;background:#d4d4d4;opacity:0.42"></div>
<div class="a" style="left:1266.5px;top:61.8px;width:2.8px;height:1.8px;background:#569cd6;opacity:0.42"></div>
<div class="a" style="left:1270.3px;top:61.8px;width:0.9px;height:1.8px;background:#9cdcfe;opacity:0.42"></div>
<div class="a" style="left:1271.3px;top:61.8px;width:1.9px;height:1.8px;background:#d4d4d4;opacity:0.42"></div>
<div class="a" style="left:1274.2px;top:61.8px;width:16.1px;height:1.8px;background:#6a9955;opacity:0.42"></div>
<div class="a" style="left:1248.5px;top:63.8px;width:2.8px;height:1.8px;background:#569cd6;opacity:0.42"></div>
<div class="a" style="left:1252.3px;top:63.8px;width:6.6px;height:1.8px;background:#dcdcaa;opacity:0.42"></div>
<div class="a" style="left:1259.0px;top:63.8px;width:0.9px;height:1.8px;background:#d4d4d4;opacity:0.42"></div>
<div class="a" style="left:1259.9px;top:63.8px;width:2.8px;height:1.8px;background:#569cd6;opacity:0.42"></div>
<div class="a" style="left:1263.7px;top:63.8px;width:0.9px;height:1.8px;background:#9cdcfe;opacity:0.42"></div>
<div class="a" style="left:1264.7px;top:63.8px;width:0.9px;height:1.8px;background:#d4d4d4;opacity:0.42"></div>
<div class="a" style="left:1266.5px;top:63.8px;width:2.8px;height:1.8px;background:#569cd6;opacity:0.42"></div>
<div class="a" style="left:1270.3px;top:63.8px;width:0.9px;height:1.8px;background:#9cdcfe;opacity:0.42"></div>
<div class="a" style="left:1271.3px;top:63.8px;width:1.9px;height:1.8px;background:#d4d4d4;opacity:0.42"></div>
<div class="a" style="left:1274.2px;top:63.8px;width:16.1px;height:1.8px;background:#6a9955;opacity:0.42"></div>
<div class="a" style="left:1248.5px;top:65.8px;width:2.8px;height:1.8px;background:#569cd6;opacity:0.42"></div>
<div class="a" style="left:1252.3px;top:65.8px;width:6.6px;height:1.8px;background:#dcdcaa;opacity:0.42"></div>
<div class="a" style="left:1259.0px;top:65.8px;width:0.9px;height:1.8px;background:#d4d4d4;opacity:0.42"></div>
<div class="a" style="left:1259.9px;top:65.8px;width:2.8px;height:1.8px;background:#569cd6;opacity:0.42"></div>
<div class="a" style="left:1263.7px;top:65.8px;width:0.9px;height:1.8px;background:#9cdcfe;opacity:0.42"></div>
<div class="a" style="left:1264.7px;top:65.8px;width:0.9px;height:1.8px;background:#d4d4d4;opacity:0.42"></div>
<div class="a" style="left:1266.5px;top:65.8px;width:2.8px;height:1.8px;background:#569cd6;opacity:0.42"></div>
<div class="a" style="left:1270.3px;top:65.8px;width:0.9px;height:1.8px;background:#9cdcfe;opacity:0.42"></div>
<div class="a" style="left:1271.3px;top:65.8px;width:1.9px;height:1.8px;background:#d4d4d4;opacity:0.42"></div>
<div class="a" style="left:1274.2px;top:65.8px;width:16.1px;height:1.8px;background:#6a9955;opacity:0.42"></div>
<div class="a" style="left:1248.5px;top:67.8px;width:2.8px;height:1.8px;background:#569cd6;opacity:0.42"></div>
<div class="a" style="left:1252.3px;top:67.8px;width:7.6px;height:1.8px;background:#dcdcaa;opacity:0.42"></div>
<div class="a" style="left:1259.9px;top:67.8px;width:0.9px;height:1.8px;background:#d4d4d4;opacity:0.42"></div>
<div class="a" style="left:1260.8px;top:67.8px;width:2.8px;height:1.8px;background:#569cd6;opacity:0.42"></div>
<div class="a" style="left:1264.7px;top:67.8px;width:0.9px;height:1.8px;background:#9cdcfe;opacity:0.42"></div>
<div class="a" style="left:1265.6px;top:67.8px;width:0.9px;height:1.8px;background:#d4d4d4;opacity:0.42"></div>
<div class="a" style="left:1267.5px;top:67.8px;width:2.8px;height:1.8px;background:#569cd6;opacity:0.42"></div>
<div class="a" style="left:1271.3px;top:67.8px;width:0.9px;height:1.8px;background:#9cdcfe;opacity:0.42"></div>
<div class="a" style="left:1272.2px;top:67.8px;width:1.9px;height:1.8px;background:#d4d4d4;opacity:0.42"></div>
<div class="a" style="left:1275.1px;top:67.8px;width:17.1px;height:1.8px;background:#6a9955;opacity:0.42"></div>
<div class="a" style="left:1248.5px;top:69.8px;width:2.8px;height:1.8px;background:#569cd6;opacity:0.42"></div>
<div class="a" style="left:1252.3px;top:69.8px;width:6.6px;height:1.8px;background:#dcdcaa;opacity:0.42"></div>
<div class="a" style="left:1259.0px;top:69.8px;width:0.9px;height:1.8px;background:#d4d4d4;opacity:0.42"></div>
<div class="a" style="left:1259.9px;top:69.8px;width:2.8px;height:1.8px;background:#569cd6;opacity:0.42"></div>
<div class="a" style="left:1263.7px;top:69.8px;width:0.9px;height:1.8px;background:#9cdcfe;opacity:0.42"></div>
<div class="a" style="left:1264.7px;top:69.8px;width:0.9px;height:1.8px;background:#d4d4d4;opacity:0.42"></div>
<div class="a" style="left:1266.5px;top:69.8px;width:2.8px;height:1.8px;background:#569cd6;opacity:0.42"></div>
<div class="a" style="left:1270.3px;top:69.8px;width:0.9px;height:1.8px;background:#9cdcfe;opacity:0.42"></div>
<div class="a" style="left:1271.3px;top:69.8px;width:1.9px;height:1.8px;background:#d4d4d4;opacity:0.42"></div>
<div class="a" style="left:1274.2px;top:69.8px;width:16.1px;height:1.8px;background:#6a9955;opacity:0.42"></div>
<div class="a" style="left:1248.5px;top:71.8px;width:2.8px;height:1.8px;background:#569cd6;opacity:0.42"></div>
<div class="a" style="left:1252.3px;top:71.8px;width:7.6px;height:1.8px;background:#dcdcaa;opacity:0.42"></div>
<div class="a" style="left:1259.9px;top:71.8px;width:0.9px;height:1.8px;background:#d4d4d4;opacity:0.42"></div>
<div class="a" style="left:1260.8px;top:71.8px;width:2.8px;height:1.8px;background:#569cd6;opacity:0.42"></div>
<div class="a" style="left:1264.7px;top:71.8px;width:0.9px;height:1.8px;background:#9cdcfe;opacity:0.42"></div>
<div class="a" style="left:1265.6px;top:71.8px;width:0.9px;height:1.8px;background:#d4d4d4;opacity:0.42"></div>
<div class="a" style="left:1267.5px;top:71.8px;width:2.8px;height:1.8px;background:#569cd6;opacity:0.42"></div>
<div class="a" style="left:1271.3px;top:71.8px;width:0.9px;height:1.8px;background:#9cdcfe;opacity:0.42"></div>
<div class="a" style="left:1272.2px;top:71.8px;width:1.9px;height:1.8px;background:#d4d4d4;opacity:0.42"></div>
<div class="a" style="left:1275.1px;top:71.8px;width:17.1px;height:1.8px;background:#6a9955;opacity:0.42"></div>
<div class="a" style="left:1248.5px;top:73.8px;width:3.8px;height:1.8px;background:#569cd6;opacity:0.42"></div>
<div class="a" style="left:1252.3px;top:73.8px;width:0.9px;height:1.8px;background:#d4d4d4;opacity:0.42"></div>
<div class="a" style="left:1254.2px;top:73.8px;width:7.6px;height:1.8px;background:#dcdcaa;opacity:0.42"></div>
<div class="a" style="left:1261.8px;top:73.8px;width:0.9px;height:1.8px;background:#d4d4d4;opacity:0.42"></div>
<div class="a" style="left:1262.8px;top:73.8px;width:2.8px;height:1.8px;background:#569cd6;opacity:0.42"></div>
<div class="a" style="left:1266.5px;top:73.8px;width:0.9px;height:1.8px;background:#9cdcfe;opacity:0.42"></div>
<div class="a" style="left:1267.5px;top:73.8px;width:0.9px;height:1.8px;background:#d4d4d4;opacity:0.42"></div>
<div class="a" style="left:1268.5px;top:73.8px;width:22.8px;height:1.8px;background:#6a9955;opacity:0.42"></div>
<div class="a" style="left:1248.5px;top:75.8px;width:0.9px;height:1.8px;background:#d4d4d4;opacity:0.42"></div>
<div class="a" style="left:1252.3px;top:77.8px;width:5.7px;height:1.8px;background:#dcdcaa;opacity:0.42"></div>
<div class="a" style="left:1258.0px;top:77.8px;width:0.9px;height:1.8px;background:#d4d4d4;opacity:0.42"></div>
<div class="a" style="left:1259.0px;top:77.8px;width:4.8px;height:1.8px;background:#ce9178;opacity:0.42"></div>
<div class="a" style="left:1264.7px;top:77.8px;width:7.6px;height:1.8px;background:#ce9178;opacity:0.42"></div>
<div class="a" style="left:1273.2px;top:77.8px;width:6.6px;height:1.8px;background:#ce9178;opacity:0.42"></div>
<div class="a" style="left:1280.8px;top:77.8px;width:4.8px;height:1.8px;background:#ce9178;opacity:0.42"></div>
<div class="a" style="left:1285.5px;top:77.8px;width:1.9px;height:1.8px;background:#9cdcfe;opacity:0.42"></div>
<div class="a" style="left:1287.5px;top:77.8px;width:1.9px;height:1.8px;background:#d7ba7d;opacity:0.42"></div>
<div class="a" style="left:1289.3px;top:77.8px;width:0.9px;height:1.8px;background:#ce9178;opacity:0.42"></div>
<div class="a" style="left:1290.3px;top:77.8px;width:0.9px;height:1.8px;background:#d4d4d4;opacity:0.42"></div>
<div class="a" style="left:1292.2px;top:77.8px;width:0.9px;height:1.8px;background:#9cdcfe;opacity:0.42"></div>
<div class="a" style="left:1293.2px;top:77.8px;width:1.9px;height:1.8px;background:#d4d4d4;opacity:0.42"></div>
<div class="a" style="left:1252.3px;top:79.8px;width:5.7px;height:1.8px;background:#c586c0;opacity:0.42"></div>
<div class="a" style="left:1259.0px;top:79.8px;width:7.6px;height:1.8px;background:#dcdcaa;opacity:0.42"></div>
<div class="a" style="left:1266.5px;top:79.8px;width:0.9px;height:1.8px;background:#d4d4d4;opacity:0.42"></div>
<div class="a" style="left:1248.5px;top:81.8px;width:0.9px;height:1.8px;background:#d4d4d4;opacity:0.42"></div>
<div class="a" style="left:1248.5px;top:85.8px;width:2.8px;height:1.8px;background:#569cd6;opacity:0.42"></div>
<div class="a" style="left:1252.3px;top:85.8px;width:3.8px;height:1.8px;background:#dcdcaa;opacity:0.42"></div>
<div class="a" style="left:1256.1px;top:85.8px;width:1.9px;height:1.8px;background:#d4d4d4;opacity:0.42"></div>
<div class="a" style="left:1248.5px;top:87.8px;width:0.9px;height:1.8px;background:#d4d4d4;opacity:0.42"></div>
<div class="a" style="left:1252.3px;top:89.8px;width:2.8px;height:1.8px;background:#569cd6;opacity:0.42"></div>
<div class="a" style="left:1256.1px;top:89.8px;width:5.7px;height:1.8px;background:#9cdcfe;opacity:0.42"></div>
<div class="a" style="left:1262.8px;top:89.8px;width:0.9px;height:1.8px;background:#d4d4d4;opacity:0.42"></div>
<div class="a" style="left:1264.7px;top:89.8px;width:0.9px;height:1.8px;background:#b5cea8;opacity:0.42"></div>
<div class="a" style="left:1265.6px;top:89.8px;width:0.9px;height:1.8px;background:#d4d4d4;opacity:0.42"></div>
<div class="a" style="left:1252.3px;top:91.8px;width:5.7px;height:1.8px;background:#9cdcfe;opacity:0.42"></div>
<div class="a" style="left:1259.0px;top:91.8px;width:0.9px;height:1.8px;background:#d4d4d4;opacity:0.42"></div>
<div class="a" style="left:1260.8px;top:91.8px;width:6.6px;height:1.8px;background:#dcdcaa;opacity:0.42"></div>
<div class="a" style="left:1267.5px;top:91.8px;width:0.9px;height:1.8px;background:#d4d4d4;opacity:0.42"></div>
<div class="a" style="left:1268.5px;top:91.8px;width:0.9px;height:1.8px;background:#b5cea8;opacity:0.42"></div>
<div class="a" style="left:1269.4px;top:91.8px;width:0.9px;height:1.8px;background:#d4d4d4;opacity:0.42"></div>
<div class="a" style="left:1271.3px;top:91.8px;width:0.9px;height:1.8px;background:#b5cea8;opacity:0.42"></div>
<div class="a" style="left:1272.2px;top:91.8px;width:1.9px;height:1.8px;background:#d4d4d4;opacity:0.42"></div>
<div class="a" style="left:1275.1px;top:91.8px;width:7.6px;height:1.8px;background:#6a9955;opacity:0.42"></div>
<div class="a" style="left:1283.7px;top:91.8px;width:0.9px;height:1.8px;background:#6a9955;opacity:0.42"></div>
<div class="a" style="left:1285.5px;top:91.8px;width:0.9px;height:1.8px;background:#6a9955;opacity:0.42"></div>
<div class="a" style="left:1287.5px;top:91.8px;width:0.9px;height:1.8px;background:#6a9955;opacity:0.42"></div>
<div class="a" style="left:1289.3px;top:91.8px;width:0.9px;height:1.8px;background:#6a9955;opacity:0.42"></div>
<div class="a" style="left:1291.2px;top:91.8px;width:0.9px;height:1.8px;background:#6a9955;opacity:0.42"></div>
<div class="a" style="left:1293.2px;top:91.8px;width:0.9px;height:1.8px;background:#6a9955;opacity:0.42"></div>
<div class="a" style="left:1252.3px;top:93.8px;width:5.7px;height:1.8px;background:#dcdcaa;opacity:0.42"></div>
<div class="a" style="left:1258.0px;top:93.8px;width:0.9px;height:1.8px;background:#d4d4d4;opacity:0.42"></div>
<div class="a" style="left:1259.0px;top:93.8px;width:4.8px;height:1.8px;background:#ce9178;opacity:0.42"></div>
<div class="a" style="left:1264.7px;top:93.8px;width:0.9px;height:1.8px;background:#ce9178;opacity:0.42"></div>
<div class="a" style="left:1266.5px;top:93.8px;width:1.9px;height:1.8px;background:#ce9178;opacity:0.42"></div>
<div class="a" style="left:1269.4px;top:93.8px;width:1.9px;height:1.8px;background:#ce9178;opacity:0.42"></div>
<div class="a" style="left:1271.3px;top:93.8px;width:1.9px;height:1.8px;background:#9cdcfe;opacity:0.42"></div>
<div class="a" style="left:1273.2px;top:93.8px;width:1.9px;height:1.8px;background:#d7ba7d;opacity:0.42"></div>
<div class="a" style="left:1275.1px;top:93.8px;width:0.9px;height:1.8px;background:#ce9178;opacity:0.42"></div>
<div class="a" style="left:1276.0px;top:93.8px;width:0.9px;height:1.8px;background:#d4d4d4;opacity:0.42"></div>
<div class="a" style="left:1278.0px;top:93.8px;width:5.7px;height:1.8px;background:#9cdcfe;opacity:0.42"></div>
<div class="a" style="left:1283.7px;top:93.8px;width:1.9px;height:1.8px;background:#d4d4d4;opacity:0.42"></div>
<div class="a" style="left:1252.3px;top:95.8px;width:5.7px;height:1.8px;background:#9cdcfe;opacity:0.42"></div>
<div class="a" style="left:1259.0px;top:95.8px;width:0.9px;height:1.8px;background:#d4d4d4;opacity:0.42"></div>
<div class="a" style="left:1260.8px;top:95.8px;width:6.6px;height:1.8px;background:#dcdcaa;opacity:0.42"></div>
<div class="a" style="left:1267.5px;top:95.8px;width:0.9px;height:1.8px;background:#d4d4d4;opacity:0.42"></div>
<div class="a" style="left:1268.5px;top:95.8px;width:0.9px;height:1.8px;background:#b5cea8;opacity:0.42"></div>
<div class="a" style="left:1269.4px;top:95.8px;width:0.9px;height:1.8px;background:#d4d4d4;opacity:0.42"></div>
<div class="a" style="left:1271.3px;top:95.8px;width:0.9px;height:1.8px;background:#b5cea8;opacity:0.42"></div>
<div class="a" style="left:1272.2px;top:95.8px;width:1.9px;height:1.8px;background:#d4d4d4;opacity:0.42"></div>
<div class="a" style="left:1275.1px;top:95.8px;width:7.6px;height:1.8px;background:#6a9955;opacity:0.42"></div>
<div class="a" style="left:1283.7px;top:95.8px;width:0.9px;height:1.8px;background:#6a9955;opacity:0.42"></div>
<div class="a" style="left:1285.5px;top:95.8px;width:0.9px;height:1.8px;background:#6a9955;opacity:0.42"></div>
<div class="a" style="left:1287.5px;top:95.8px;width:0.9px;height:1.8px;background:#6a9955;opacity:0.42"></div>
<div class="a" style="left:1289.3px;top:95.8px;width:0.9px;height:1.8px;background:#6a9955;opacity:0.42"></div>
<div class="a" style="left:1291.2px;top:95.8px;width:1.9px;height:1.8px;background:#6a9955;opacity:0.42"></div>
<div class="a" style="left:1294.1px;top:95.8px;width:0.9px;height:1.8px;background:#6a9955;opacity:0.42"></div>
<div class="a" style="left:1252.3px;top:97.8px;width:5.7px;height:1.8px;background:#dcdcaa;opacity:0.42"></div>
<div class="a" style="left:1258.0px;top:97.8px;width:0.9px;height:1.8px;background:#d4d4d4;opacity:0.42"></div>
<div class="a" style="left:1259.0px;top:97.8px;width:4.8px;height:1.8px;background:#ce9178;opacity:0.42"></div>
<div class="a" style="left:1264.7px;top:97.8px;width:0.9px;height:1.8px;background:#ce9178;opacity:0.42"></div>
<div class="a" style="left:1266.5px;top:97.8px;width:1.9px;height:1.8px;background:#ce9178;opacity:0.42"></div>
<div class="a" style="left:1269.4px;top:97.8px;width:1.9px;height:1.8px;background:#ce9178;opacity:0.42"></div>
<div class="a" style="left:1271.3px;top:97.8px;width:1.9px;height:1.8px;background:#9cdcfe;opacity:0.42"></div>
<div class="a" style="left:1273.2px;top:97.8px;width:1.9px;height:1.8px;background:#d7ba7d;opacity:0.42"></div>
<div class="a" style="left:1275.1px;top:97.8px;width:0.9px;height:1.8px;background:#ce9178;opacity:0.42"></div>
<div class="a" style="left:1276.0px;top:97.8px;width:0.9px;height:1.8px;background:#d4d4d4;opacity:0.42"></div>
<div class="a" style="left:1278.0px;top:97.8px;width:5.7px;height:1.8px;background:#9cdcfe;opacity:0.42"></div>
<div class="a" style="left:1283.7px;top:97.8px;width:1.9px;height:1.8px;background:#d4d4d4;opacity:0.42"></div>
<div class="a" style="left:1252.3px;top:99.8px;width:5.7px;height:1.8px;background:#9cdcfe;opacity:0.42"></div>
<div class="a" style="left:1259.0px;top:99.8px;width:0.9px;height:1.8px;background:#d4d4d4;opacity:0.42"></div>
<div class="a" style="left:1260.8px;top:99.8px;width:7.6px;height:1.8px;background:#dcdcaa;opacity:0.42"></div>
<div class="a" style="left:1268.5px;top:99.8px;width:0.9px;height:1.8px;background:#d4d4d4;opacity:0.42"></div>
<div class="a" style="left:1269.4px;top:99.8px;width:0.9px;height:1.8px;background:#b5cea8;opacity:0.42"></div>
<div class="a" style="left:1270.3px;top:99.8px;width:0.9px;height:1.8px;background:#d4d4d4;opacity:0.42"></div>
<div class="a" style="left:1272.2px;top:99.8px;width:0.9px;height:1.8px;background:#d4d4d4;opacity:0.42"></div>
<div class="a" style="left:1273.2px;top:99.8px;width:0.9px;height:1.8px;background:#b5cea8;opacity:0.42"></div>
<div class="a" style="left:1274.2px;top:99.8px;width:1.9px;height:1.8px;background:#d4d4d4;opacity:0.42"></div>
<div class="a" style="left:1277.0px;top:99.8px;width:7.6px;height:1.8px;background:#6a9955;opacity:0.42"></div>
<div class="a" style="left:1285.5px;top:99.8px;width:0.9px;height:1.8px;background:#6a9955;opacity:0.42"></div>
<div class="a" style="left:1287.5px;top:99.8px;width:0.9px;height:1.8px;background:#6a9955;opacity:0.42"></div>
<div class="a" style="left:1289.3px;top:99.8px;width:0.9px;height:1.8px;background:#6a9955;opacity:0.42"></div>
<div class="a" style="left:1291.2px;top:99.8px;width:0.9px;height:1.8px;background:#6a9955;opacity:0.42"></div>
<div class="a" style="left:1293.2px;top:99.8px;width:0.9px;height:1.8px;background:#6a9955;opacity:0.42"></div>
<div class="a" style="left:1295.0px;top:99.8px;width:13.3px;height:1.8px;background:#6a9955;opacity:0.42"></div>
<div class="a" style="left:1252.3px;top:101.8px;width:5.7px;height:1.8px;background:#dcdcaa;opacity:0.42"></div>
<div class="a" style="left:1258.0px;top:101.8px;width:0.9px;height:1.8px;background:#d4d4d4;opacity:0.42"></div>
<div class="a" style="left:1259.0px;top:101.8px;width:4.8px;height:1.8px;background:#ce9178;opacity:0.42"></div>
<div class="a" style="left:1264.7px;top:101.8px;width:1.9px;height:1.8px;background:#ce9178;opacity:0.42"></div>
<div class="a" style="left:1267.5px;top:101.8px;width:1.9px;height:1.8px;background:#ce9178;opacity:0.42"></div>
<div class="a" style="left:1270.3px;top:101.8px;width:2.8px;height:1.8px;background:#ce9178;opacity:0.42"></div>
<div class="a" style="left:1273.2px;top:101.8px;width:1.9px;height:1.8px;background:#9cdcfe;opacity:0.42"></div>
<div class="a" style="left:1275.1px;top:101.8px;width:1.9px;height:1.8px;background:#d7ba7d;opacity:0.42"></div>
<div class="a" style="left:1277.0px;top:101.8px;width:0.9px;height:1.8px;background:#ce9178;opacity:0.42"></div>
<div class="a" style="left:1278.0px;top:101.8px;width:0.9px;height:1.8px;background:#d4d4d4;opacity:0.42"></div>
<div class="a" style="left:1279.8px;top:101.8px;width:5.7px;height:1.8px;background:#9cdcfe;opacity:0.42"></div>
<div class="a" style="left:1285.5px;top:101.8px;width:1.9px;height:1.8px;background:#d4d4d4;opacity:0.42"></div>
<div class="a" style="left:1252.3px;top:105.8px;width:5.7px;height:1.8px;background:#c586c0;opacity:0.42"></div>
<div class="a" style="left:1259.0px;top:105.8px;width:0.9px;height:1.8px;background:#b5cea8;opacity:0.42"></div>
<div class="a" style="left:1259.9px;top:105.8px;width:0.9px;height:1.8px;background:#d4d4d4;opacity:0.42"></div>
<div class="a" style="left:1248.5px;top:107.8px;width:0.9px;height:1.8px;background:#d4d4d4;opacity:0.42"></div>
<div class="a" style="left:1360px;top:56px;width:1px;height:574px;background:#3a3a3a"></div>
<div class="a" style="left:1361px;top:278px;width:13px;height:11px;background:#5f5f12"></div>
<div class="a" style="left:1361px;top:278px;width:13px;height:1.5px;background:#bdbdbd"></div>
</div><!--ED_END-->
 <div id="panel">
<div class="a" style="left:0;top:0;width:1374px;height:1px;background:#414141"></div>
<div class="a" style="left:19.0px;top:11.5px;font-size:11px;line-height:14px;color:#969696;font-weight:normal;">问题</div>
<div class="a" style="left:64.0px;top:11.5px;font-size:11px;line-height:14px;color:#969696;font-weight:normal;">输出</div>
<div class="a" style="left:111.0px;top:11.5px;font-size:11px;line-height:14px;color:#969696;font-weight:normal;">调试控制台</div>
<div class="a" style="left:188.0px;top:11.5px;font-size:11px;line-height:14px;color:#e7e7e7;font-weight:normal;">终端</div>
<div class="a" style="left:186px;top:29px;width:27px;height:1px;background:#e7e7e7"></div>
<svg class="a" style="left:1284px;top:8px" width="85" height="22" viewBox="1820 712 85 22" fill="none" stroke="#c5c5c5" stroke-width="1.2">
<path d="M1830.2 716v13 M1823.7 722.5h13"/>
<path d="M1843.2 720.8l3.8 3.8 3.8-3.8"/>
<path d="M1864.8 723.5l5-5 5 5"/>
<path d="M1886.6 717.6l9 9 M1895.6 717.6l-9 9"/>
</svg>
<div class="a" style="left:1174px;top:32px;width:1px;height:250px;background:#454545"></div>
<svg class="a" style="left:1185px;top:39px" width="16" height="16" fill="none" stroke="#c5c5c5" stroke-width="1.1"><path d="M1.9 1.9h12.3v12.3h-12.3z M6 5l3 3-3 3"/></svg>
<div class="a" style="left:1204.5px;top:37.7px;font-size:13px;line-height:17px;color:#cccccc;font-weight:normal;">bash</div>
<div class="a" style="left:1175px;top:57px;width:199px;height:22px;background:#37373d"></div>
<svg class="a" style="left:1185px;top:60.5px" width="16" height="16" fill="none" stroke="#c5c5c5">
<path d="M2.3 2.3l1.6-0.8 5.6 5.6" stroke-width="1.2"/><path d="M9.6 9.6l3.6 3.6" stroke-width="2.6" stroke-linecap="round"/><path d="M2.6 13.4l5.6-5.6" stroke-width="1.8" stroke-linecap="round"/><path d="M8.4 7.6a3.1 3.1 0 0 1 4-4.6l-1.9 1.9 0.6 1.2 1.2 0.6 1.9-1.9a3.1 3.1 0 0 1 -4.6 4" stroke-width="1.2"/>
</svg>
<div class="a" style="left:1204.5px;top:59.5px;font-size:13px;line-height:17px;color:#cccccc;font-weight:normal;letter-spacing:-0.6px">Run RISCV-QEMU</div>
<div class="a" style="left:1313.5px;top:61.0px;font-size:11.5px;line-height:15px;color:#9b9b9b;font-weight:normal;">Task</div>
<svg class="a" style="left:1348px;top:60px" width="16" height="16" fill="none" stroke="#9b9b9b" stroke-width="1.2"><path d="M2.5 9l3.5 3.5 8-9"/></svg>
<div class="a m term" style="left:18.8px;top:44.6px;font-weight:normal">CC -[M] <span class="cj" style="width:63.36px;font-size:13px;letter-spacing:2.84px">正在构建</span>... jal.S</div>
<div class="a m term" style="left:18.8px;top:60.4px;font-weight:normal">CC -[M] <span class="cj" style="width:63.36px;font-size:13px;letter-spacing:2.84px">正在构建</span>... main.c</div>
<div class="a m term" style="left:18.8px;top:76.2px;font-weight:normal">CC -[M] <span class="cj" style="width:63.36px;font-size:13px;letter-spacing:2.84px">正在构建</span>... main.elf</div>
<div class="a m term" style="left:18.8px;top:92.0px;font-weight:normal">CC -[M] <span class="cj" style="width:63.36px;font-size:13px;letter-spacing:2.84px">正在构建</span>... beq.o</div>
<div class="a m term" style="left:18.8px;top:107.8px;font-weight:normal">CC -[M] <span class="cj" style="width:63.36px;font-size:13px;letter-spacing:2.84px">正在构建</span>... jal.o</div>
<div class="a m term" style="left:18.8px;top:123.6px;font-weight:normal">CC -[M] <span class="cj" style="width:63.36px;font-size:13px;letter-spacing:2.84px">正在构建</span>... main.o</div>
<div class="a m term" style="left:18.8px;top:155.2px;font-weight:bold"><span class="cj" style="width:253.44px;font-size:13px;letter-spacing:2.84px">终端将被任务重用，按任意键关闭。</span></div>
<div class="a m term" style="left:18.8px;top:186.8px;font-weight:normal">&gt; Executing task: echo Starting RISCV-QEMU&amp;qemu-riscv32 -g 1234 ./*.elf &lt;</div>
<div class="a m term" style="left:18.8px;top:218.4px;font-weight:normal">Starting RISCV-QEMU</div>
<div class="a m term" style="left:18.8px;top:234.2px;font-weight:normal">This a &gt;= b:1</div>
<div class="a m term" style="left:18.8px;top:250.0px;font-weight:normal">This a &gt;= b:1</div>
<div class="a" style="left:19.100000000000023px;top:264.79999999999995px;width:8px;height:15.3px;border:1px solid #cccccc"></div>
<div class="a" style="left:3.2999999999999545px;top:246.79999999999995px;width:670.9px;height:24.0px;border:2.7px solid #f01b4e"></div>
</div><!--PANEL_END-->
 <div id="topshadow" style="position:absolute;left:0;top:64px;width:1900px;height:4px;background:linear-gradient(rgba(0,0,0,0.35),rgba(0,0,0,0))"></div>
<div id="status">
<div class="a" style="left:0;top:0;width:33.5px;height:22px;background:#16825d"></div>
<svg class="a" style="left:10px;top:3px" width="14" height="16" fill="none" stroke="#e6f2ee" stroke-width="1.2"><path d="M2.3 5.5l3.5 3.7-3.5 3.7 M11.3 2l-3.5 3.5 3.5 3.5"/></svg>
<svg class="a" style="left:41px;top:4px" width="50" height="15" fill="none" stroke="#f3e5dc" stroke-width="1.1">
<circle cx="6.5" cy="7" r="5.6"/><path d="M4.3 4.8l4.4 4.4 M8.7 4.8l-4.4 4.4"/>
<path d="M32.5 1.5l6 10.8h-12z M32.5 5v3.8 M32.5 10v0.8"/>
</svg>
<div class="a" style="left:57.5px;top:2.5px;font-size:12.5px;line-height:17px;color:#f3e5dc;">0</div>
<div class="a" style="left:83.0px;top:2.5px;font-size:12.5px;line-height:17px;color:#f3e5dc;">0</div>
<svg class="a" style="left:105.5px;top:3px" width="16" height="16" fill="none" stroke="#f3e5dc">
<path d="M2.3 2.3l1.6-0.8 5.6 5.6" stroke-width="1.2"/><path d="M9.6 9.6l3.6 3.6" stroke-width="2.6" stroke-linecap="round"/><path d="M2.6 13.4l5.6-5.6" stroke-width="1.8" stroke-linecap="round"/><path d="M8.4 7.6a3.1 3.1 0 0 1 4-4.6l-1.9 1.9 0.6 1.2 1.2 0.6 1.9-1.9a3.1 3.1 0 0 1 -4.6 4" stroke-width="1.2"/>
</svg>
<div class="a" style="left:122.0px;top:2.5px;font-size:12.5px;line-height:17px;color:#f3e5dc;">1</div>
<svg class="a" style="left:144px;top:3.5px" width="16" height="16" fill="none" stroke="#f3e5dc" stroke-width="1.2">
<path d="M5 8.5v-6.5l9.5 5.5-6 3.4"/><circle cx="4.8" cy="11.5" r="2.5"/><path d="M1.5 10h1 M1.5 13h1 M7 10h1 M7 13h1 M2.3 11.5h5"/>
</svg>
<div class="a" style="left:162.0px;top:2.5px;font-size:12px;line-height:17px;color:#f3e5dc;letter-spacing:-0.2px">(gdb) 启动 (17)</div>
<div class="a" style="left:1566.0px;top:2.5px;font-size:12.5px;line-height:17px;color:#f3e5dc;letter-spacing:-0.6px">行 23，列 1</div>
<div class="a" style="left:1642.0px;top:2.5px;font-size:12.5px;line-height:17px;color:#f3e5dc;letter-spacing:-0.4px">空格: 4</div>
<div class="a" style="left:1695.0px;top:2.5px;font-size:12.5px;line-height:17px;color:#f3e5dc;letter-spacing:-0.4px">UTF-8</div>
<div class="a" style="left:1743.0px;top:2.5px;font-size:12.5px;line-height:17px;color:#f3e5dc;letter-spacing:0px">LF</div>
<div class="a" style="left:1772.0px;top:2.5px;font-size:12.5px;line-height:17px;color:#f3e5dc;letter-spacing:0px">C</div>
<div class="a" style="left:1796.0px;top:2.5px;font-size:12.5px;line-height:17px;color:#f3e5dc;letter-spacing:0px">Linux</div>
<svg class="a" style="left:1840px;top:3.5px" width="16" height="16" fill="none" stroke="#f3e5dc" stroke-width="1.2">
<circle cx="7" cy="5.5" r="3.3"/><path d="M1.8 14.5c0.5-3.5 2.5-5.5 5.2-5.5 M9.5 9.5l4.5-4.5 M10.5 2h3.5v3.5" />
</svg>
<svg class="a" style="left:1870px;top:3px" width="17" height="17" fill="none" stroke="#f3e5dc" stroke-width="1.2">
<path d="M3.5 12.5v-5a4.5 4.5 0 0 1 7-3.7 M12.5 8.5v4 M2 12.5h12 M6.5 14.5h3"/>
</svg>
<div class="a" style="left:1879px;top:5px;width:5.6px;height:5.6px;border-radius:50%;background:#ffffff"></div>
</div><!--ST_END-->
</div>
</body></html>
